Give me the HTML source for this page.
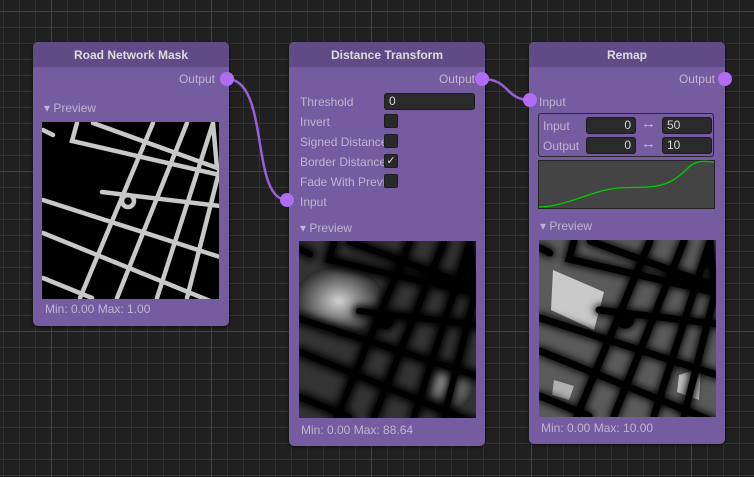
<!DOCTYPE html>
<html><head><style>
*{margin:0;padding:0;box-sizing:border-box}
body{width:754px;height:477px;overflow:hidden;background:#202020;font-family:"Liberation Sans",sans-serif;font-size:12px;position:relative;
background-image:
linear-gradient(#444 1px,transparent 1px),linear-gradient(90deg,#444 1px,transparent 1px),
linear-gradient(#323232 1px,transparent 1px),linear-gradient(90deg,#323232 1px,transparent 1px);
background-size:160px 160px,160px 160px,16px 16px,16px 16px;
background-position:0 11px,51px 0,0 11px,3px 0}
.node{position:absolute;background:#755b9f;border-radius:5px;box-shadow:0 1px 3px rgba(0,0,0,.6)}
.hd{height:25px;background:#604b86;border-radius:5px 5px 0 0;color:#dcdcdc;font-weight:bold;text-align:center;line-height:26px;font-size:12px}
.t{position:absolute;color:#c0b4d0;white-space:nowrap}
.port{position:absolute;width:14px;height:14px;border-radius:50%;background:#b06cf5}
.pv{position:absolute;background:#000}
.fld{position:absolute;background:#2a2a2a;border:1px solid #1c1c1c;border-radius:3px;color:#d6d6d6;line-height:15px;padding:0 4px}
.cb{position:absolute;width:14px;height:14px;background:#2a2a2a;border:1px solid #1c1c1c;border-radius:2px;color:#ddd;font-size:11px;line-height:12px;text-align:center}
.ar{position:absolute;color:#c0b4d0;font-size:15px}
</style></head><body>
<svg width="754" height="477" style="position:absolute;left:0;top:0">
<path d="M227 79 C 270 79, 250 200, 287 200" stroke="#9a5fd6" stroke-width="2.5" fill="none"/>
<path d="M482 79 C 510 79, 505 100, 530 100" stroke="#9a5fd6" stroke-width="2.5" fill="none"/>
<defs>
<g id="roads" fill="none" stroke-linecap="round">
<path d="M1 8 L11 13 M35 1 L30 19 L178 53 M51 1 L178 47 M1 78 L178 135 M1 111 L178 183 M1 156 L50 176 M111 1 L38 176 M145 1 L75 176 M171 1 L115 176 M178 46 L145 176 M171 1 L175 46 M60 70 L178 84"/>
<circle cx="86" cy="79" r="6"/>
</g>
<filter id="bl"><feGaussianBlur stdDeviation="4"/></filter>
<radialGradient id="rg"><stop offset="0" stop-color="#d0d0d0"/><stop offset="1" stop-color="#2a2a2a"/></radialGradient>
</defs>
</svg>

<div class="node" style="left:33px;top:42px;width:196px;height:284px">
<div class="hd">Road Network Mask</div>
<div class="t" style="right:14px;top:30px">Output</div>
<div class="t" style="left:11px;top:59px">▾ Preview</div>
<svg class="pv" style="left:9px;top:80px" width="177" height="177"><use href="#roads" stroke="#c8c8c8" stroke-width="4.5"/></svg>
<div class="t" style="left:12px;top:260px">Min: 0.00 Max: 1.00</div>
</div>
<div class="port" style="left:220px;top:72px"></div>

<div class="node" style="left:289px;top:42px;width:196px;height:404px">
<div class="hd">Distance Transform</div>
<div class="t" style="right:10px;top:30px">Output</div>
<div class="t" style="left:11px;top:53px">Threshold</div><div class="fld" style="left:95px;top:51px;width:91px;height:17px">0</div>
<div class="t" style="left:11px;top:73px">Invert</div><div class="cb" style="left:95px;top:72px"></div>
<div class="t" style="left:11px;top:93px;width:95px;overflow:hidden">Signed Distance</div><div class="cb" style="left:95px;top:92px"></div>
<div class="t" style="left:11px;top:113px;width:95px;overflow:hidden">Border Distance</div><div class="cb" style="left:95px;top:112px">✓</div>
<div class="t" style="left:11px;top:133px;width:93px;overflow:hidden">Fade With Preview</div><div class="cb" style="left:95px;top:132px"></div>
<div class="t" style="left:11px;top:153px">Input</div>
<div class="t" style="left:11px;top:179px">▾ Preview</div>
<svg class="pv" style="left:10px;top:199px" width="177" height="177">
<rect width="177" height="177" fill="#333"/>
<ellipse cx="40" cy="60" rx="45" ry="35" fill="url(#rg)"/>
<ellipse cx="150" cy="145" rx="25" ry="25" fill="url(#rg)" opacity=".8"/>
<g filter="url(#bl)"><use href="#roads" stroke="#000" stroke-width="12"/></g>
<use href="#roads" stroke="#000" stroke-width="6"/>
</svg>
<div class="t" style="left:12px;top:381px">Min: 0.00 Max: 88.64</div>
</div>
<div class="port" style="left:475px;top:72px"></div>
<div class="port" style="left:280px;top:193px"></div>

<div class="node" style="left:529px;top:42px;width:196px;height:402px">
<div class="hd">Remap</div>
<div class="t" style="right:10px;top:30px">Output</div>
<div class="t" style="left:10px;top:53px">Input</div>
<div style="position:absolute;left:9px;top:71px;width:176px;height:44px;border:1px solid #2a2a2a;border-radius:3px"></div>
<div class="t" style="left:14px;top:77px">Input</div>
<div class="fld" style="left:57px;top:75px;width:50px;height:17px;text-align:right">0</div>
<div class="ar" style="left:112px;top:73px">↔</div>
<div class="fld" style="left:133px;top:75px;width:50px;height:17px">50</div>
<div class="t" style="left:14px;top:97px">Output</div>
<div class="fld" style="left:57px;top:95px;width:50px;height:17px;text-align:right">0</div>
<div class="ar" style="left:112px;top:93px">↔</div>
<div class="fld" style="left:133px;top:95px;width:50px;height:17px">10</div>
<svg style="position:absolute;left:9px;top:118px" width="177" height="49"><rect x=".5" y=".5" width="176" height="48" fill="#444" stroke="#222"/>
<path d="M1 47 C 20 47, 40 38, 60 32 S 90 28, 110 27 S 140 18, 150 8 S 170 2, 176 2" stroke="#0c0" stroke-width="1.3" fill="none"/></svg>
<div class="t" style="left:11px;top:177px">▾ Preview</div>
<svg class="pv" style="left:10px;top:198px" width="177" height="177">
<rect width="177" height="177" fill="#5a5a5a"/>
<polygon points="14,30 65,52 55,90 12,70" fill="#c8c8c8"/>
<polygon points="140,135 162,128 160,160 138,152" fill="#c0c0c0"/>
<polygon points="15,140 35,146 30,160 13,155" fill="#b0b0b0"/>
<g filter="url(#bl)"><use href="#roads" stroke="#000" stroke-width="10"/></g>
<use href="#roads" stroke="#000" stroke-width="7"/>
</svg>
<div class="t" style="left:12px;top:379px">Min: 0.00 Max: 10.00</div>
</div>
<div class="port" style="left:718px;top:72px"></div>
<div class="port" style="left:523px;top:93px"></div>
</body></html>
